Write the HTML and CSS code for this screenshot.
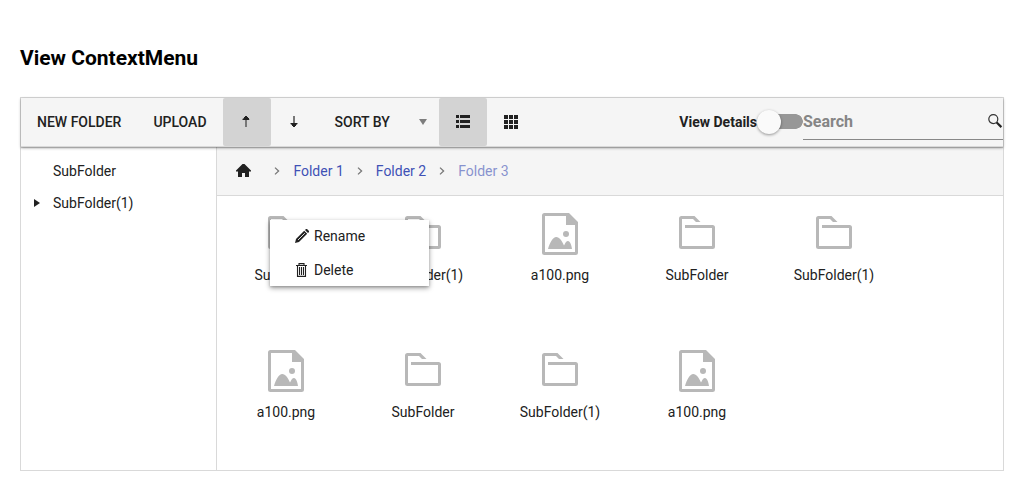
FILE: index.html
```html
<!DOCTYPE html>
<html lang="en">
<head>
<meta charset="utf-8">
<title>View ContextMenu</title>
<link rel="stylesheet" href="styles.css">
</head>
<body>
<svg class="defs" width="0" height="0">
  <symbol id="folder" viewBox="0 0 36 33">
    <path d="M2.5 0H15.5L21.5 6H17L14 3H3V30H33V12H6V9H33.5Q36 9 36 11.5V30.5Q36 33 33.5 33H2.5Q0 33 0 30.5V2.5Q0 0 2.5 0Z"/>
  </symbol>
  <symbol id="image" viewBox="0 0 36 42">
    <path fill-rule="evenodd" d="M2.5 0H27L36 9V39.5Q36 42 33.5 42H2.5Q0 42 0 39.5V2.5Q0 0 2.5 0ZM3 3V39H33V12H24V3Z"/>
    <circle cx="24" cy="21" r="3"/>
    <path d="M6 36C8 29 11 24 14.2 24C17.5 24 20 28 22 32.5C24 28.5 25 28 26 28C28 28 29.5 32 30 36Z"/>
  </symbol>
  <symbol id="chevron" viewBox="0 0 6 8">
    <path d="M1 .6L4.6 4L1 7.4" fill="none" stroke="#777" stroke-width="1.3"/>
  </symbol>
</svg>
<h1 class="title">View ContextMenu</h1>
<div class="manager">
  <div class="toolbar">
    <button class="btn btn-new">NEW FOLDER</button>
    <button class="btn btn-upload">UPLOAD</button>
    <button class="btn btn-icon btn-arrow selected"><svg width="8" height="11" viewBox="0 0 8 11"><path d="M3 3H5V11H3Z" fill="#777"/><path d="M3 0H5V1H6V2H7V3L7.5 4H.5V3L2 2V1H3Z"/></svg></button>
    <button class="btn btn-icon btn-arrow"><svg width="8" height="11" viewBox="0 0 8 11"><path d="M3 0H5V8H3Z" fill="#777"/><path d="M3 11H5V10H6V9L7.5 8V7H.5V8L2 9V10H3Z"/></svg></button>
    <button class="btn btn-sort">SORT BY<svg width="8" height="6" viewBox="0 0 8 6"><path d="M0 0H8L4 6Z" fill="#7d7d7d"/></svg></button>
    <button class="btn btn-icon btn-list selected"><svg width="14" height="13" viewBox="0 0 14 13"><path d="M0 0H3V3H0ZM4 0H14V3H4ZM0 5H3V8H0ZM4 5H14V8H4ZM0 10H3V13H0ZM4 10H14V13H4Z"/></svg></button>
    <button class="btn btn-icon"><svg width="14" height="14" viewBox="0 0 14 14"><path d="M0 0H4V4H0ZM5 0H9V4H5ZM10 0H14V4H10ZM0 5H4V9H0ZM5 5H9V9H5ZM10 5H14V9H10ZM0 10H4V14H0ZM5 10H9V14H5ZM10 10H14V14H10Z"/></svg></button>
    <div class="tools">
      <span class="details">View Details</span>
      <span class="switch"><span class="knob"></span></span>
      <label class="search"><span>Search</span><svg width="15" height="15" viewBox="0 0 15 15"><circle cx="5.3" cy="5.1" r="4.5" fill="none" stroke="#333" stroke-width="1.2"/><path d="M8.7 8.5L13.4 13.1" stroke="#222" stroke-width="2.2"/></svg></label>
    </div>
  </div>
  <div class="body">
    <div class="sidebar">
      <div class="node">SubFolder</div>
      <div class="node"><svg class="expand" width="6" height="8" viewBox="0 0 6 8"><path d="M0 0L6 4L0 8Z"/></svg>SubFolder(1)</div>
    </div>
    <div class="content">
      <div class="breadcrumbs">
        <svg class="home" width="15" height="13" viewBox="0 0 15 13"><path d="M6.5 0H8.5L15 6.4V7.5H13V13H9V9H6V13H2V7.5H0V6.4Z"/></svg>
        <svg class="sep" width="6" height="8"><use href="#chevron"/></svg>
        <a>Folder 1</a>
        <svg class="sep" width="6" height="8"><use href="#chevron"/></svg>
        <a>Folder 2</a>
        <svg class="sep" width="6" height="8"><use href="#chevron"/></svg>
        <a class="current">Folder 3</a>
      </div>
      <div class="files">
        <div class="file"><div class="thumb"><svg width="36" height="33"><use href="#folder"/></svg></div>SubFolder</div>
        <div class="file"><div class="thumb"><svg width="36" height="33"><use href="#folder"/></svg></div>SubFolder(1)</div>
        <div class="file"><div class="thumb"><svg width="36" height="42"><use href="#image"/></svg></div>a100.png</div>
        <div class="file"><div class="thumb"><svg width="36" height="33"><use href="#folder"/></svg></div>SubFolder</div>
        <div class="file"><div class="thumb"><svg width="36" height="33"><use href="#folder"/></svg></div>SubFolder(1)</div>
        <div class="file"><div class="thumb"><svg width="36" height="42"><use href="#image"/></svg></div>a100.png</div>
        <div class="file"><div class="thumb"><svg width="36" height="33"><use href="#folder"/></svg></div>SubFolder</div>
        <div class="file"><div class="thumb"><svg width="36" height="33"><use href="#folder"/></svg></div>SubFolder(1)</div>
        <div class="file"><div class="thumb"><svg width="36" height="42"><use href="#image"/></svg></div>a100.png</div>
      </div>
    </div>
  </div>
</div>
<div class="menu">
  <div class="menu-item"><svg width="14" height="14" viewBox="0 0 14 14"><path d="M0 14L1 10L9.2 1.8L12.2 4.8L4 13ZM10 1L11 0H12L14 2V3L13 4Z"/><path d="M3 11L9.8 4.2" stroke="#ddd" stroke-width="1"/></svg>Rename</div>
  <div class="menu-item"><svg width="14" height="14" viewBox="0 0 14 14"><path d="M1 2.5H12M4 2V.6H9V2M2.5 3V13.4H10.5V3M4.5 4V12M6.5 4V12M8.5 4V12" fill="none" stroke="#212121" stroke-width="1.1"/></svg>Delete</div>
</div>
</body>
</html>
```

FILE: styles.css
```css
* { box-sizing: border-box; }
body { margin: 0; padding: 44px 20px 0; background: #fff; color: #212121; font-family: Roboto, sans-serif; font-size: 14px; }
svg { display: block; flex: none; fill: #212121; }
.defs { position: absolute; }
.title { margin: 0 0 25px; font-size: 21px; line-height: 28px; font-weight: 700; color: #000; }
.manager { height: 374px; border: 1px solid #d9d9d9; display: flex; flex-direction: column; }
.toolbar { height: 49px; flex: none; display: flex; background: #f5f5f5; border-bottom: 1px solid #d9d9d9; box-shadow: 0 1px 3px rgba(0,0,0,.3), 0 1px 1px rgba(0,0,0,.2); position: relative; z-index: 1; }
.btn { height: 48px; border: 0; margin: 0; padding: 0 0 0 16px; background: transparent; color: #212121; font: 500 14px Roboto, sans-serif; white-space: nowrap; display: flex; align-items: center; }
.btn-new { width: 116px; }
.btn-upload { width: 86px; padding-left: 16.4px; }
.btn-icon { width: 48px; padding: 0; justify-content: center; }
.btn-arrow { padding: 0 2px 1px 0; }
.btn-list { padding-bottom: 1px; }
.btn-sort { width: 120px; padding: 0 12px 0 15.6px; justify-content: space-between; }
.selected { background: #d3d3d3; border-radius: 2px; }
.tools { margin-left: auto; display: flex; align-items: center; }
.details { font-weight: 700; }
.switch { width: 46px; height: 24px; display: flex; align-items: center; background: linear-gradient(#979797, #979797) 10px 4px / 28px 15px no-repeat, radial-gradient(circle at 38.5px 11.5px, #979797 7px, transparent 7.5px); }
.knob { width: 24px; height: 24px; border-radius: 50%; background: #fafafa; box-shadow: 0 1px 3px rgba(0,0,0,.4); }
.search { width: 200px; height: 36px; display: flex; justify-content: space-between; align-items: center; border-bottom: 1px solid #888; color: #858585; font-size: 16px; font-weight: 700; }
.body { flex: 1; display: flex; min-height: 0; }
.sidebar { width: 196px; flex: none; padding-top: 8px; border-right: 1px solid #d9d9d9; }
.node { height: 32px; padding-left: 32px; display: flex; align-items: center; }
.expand { margin: 0 13px 0 -19px; }
.content { flex: 1; }
.breadcrumbs { height: 49px; display: flex; align-items: center; background: #f5f5f5; border-bottom: 1px solid #d9d9d9; padding-left: 19px; color: #3f51b5; }
.home { margin: 0 10.4px 1px 0; }
.sep { margin: 0 13px; }
.current { opacity: .6; }
.files { display: grid; grid-template-columns: repeat(5, 137px); grid-auto-rows: 137px; padding-left: .5px; }
.file { display: flex; flex-direction: column; align-items: center; line-height: 20px; }
.thumb { width: 36px; height: 42px; margin: 17px 0 10px; display: flex; align-items: center; }
.thumb svg { fill: #b8b8b8; }
.thumb svg[height="33"] { margin-bottom: 3px; }
.menu { position: absolute; left: 270px; top: 220px; width: 159px; height: 66px; background: #fff; box-shadow: 0 2px 5px rgba(0,0,0,.4), 0 1px 2px rgba(0,0,0,.15); display: flex; flex-direction: column; justify-content: space-between; }
.menu-item { height: 32px; padding-left: 25px; display: flex; align-items: center; gap: 5px; }
```
